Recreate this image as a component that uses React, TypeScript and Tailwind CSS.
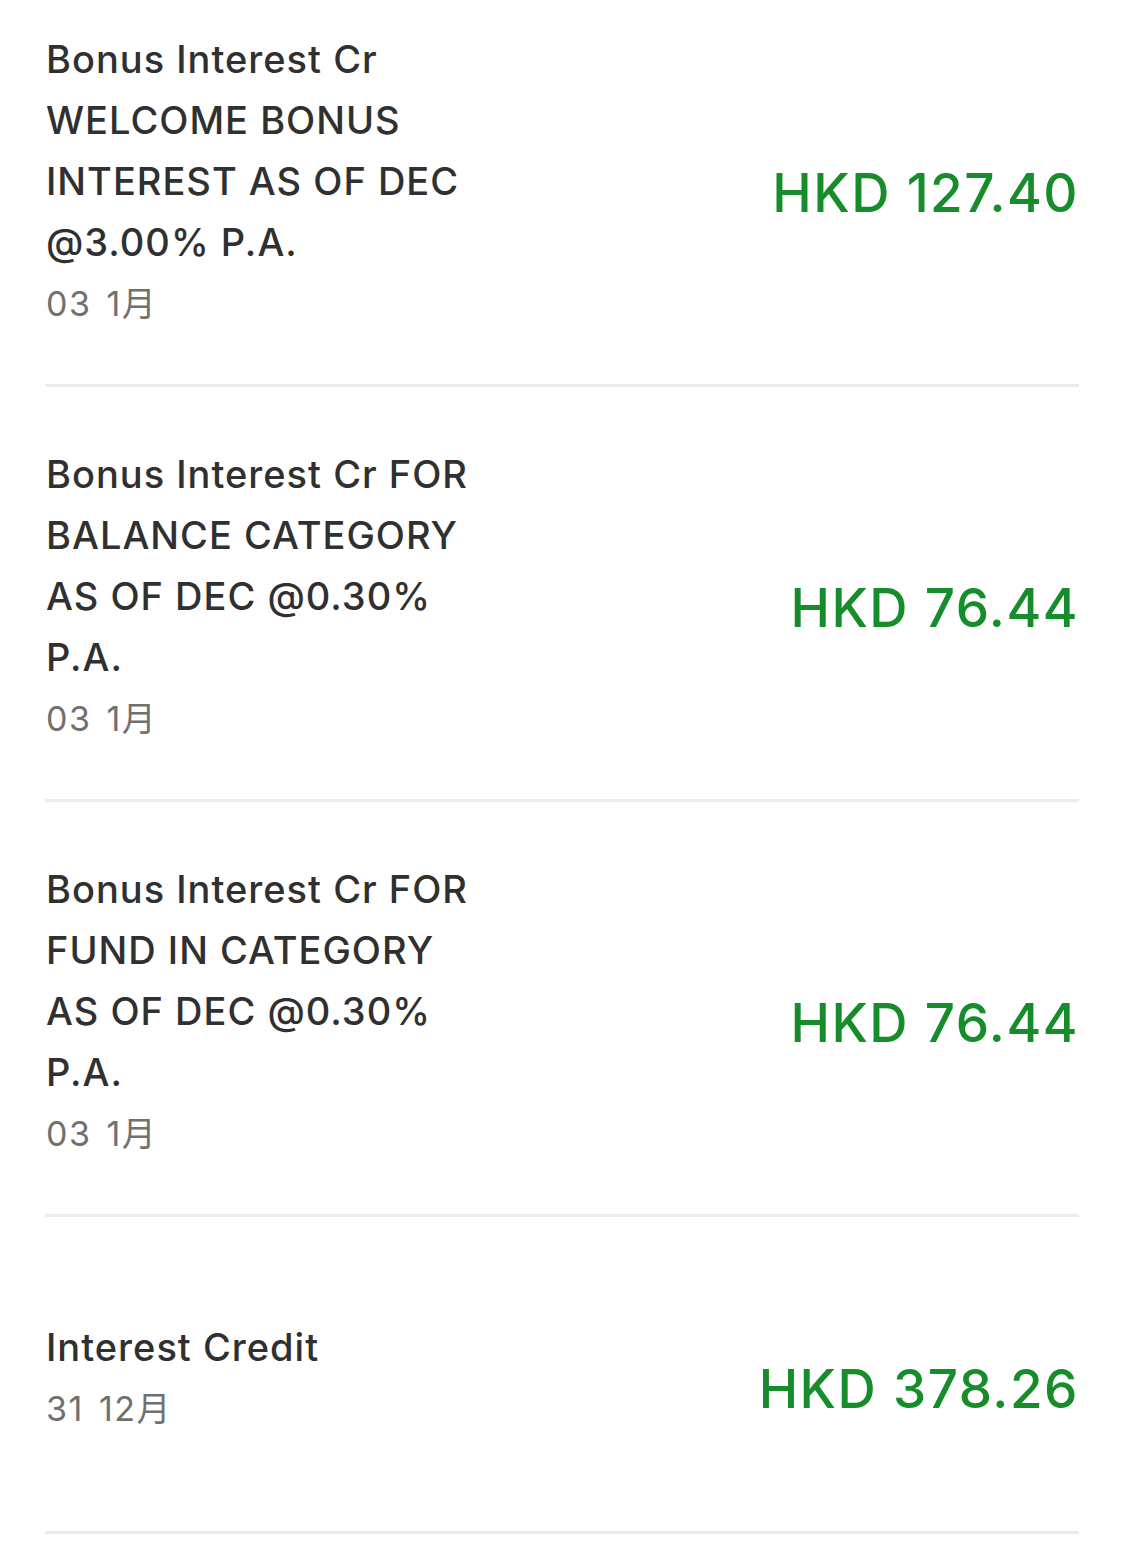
import React from 'react';

interface Txn {
  lines: string[];
  date: string;
  amount: string;
}

const txns: Txn[] = [
  {
    lines: ['Bonus Interest Cr', 'WELCOME BONUS', 'INTEREST AS OF DEC', '@3.00% P.A.'],
    date: '03 1月',
    amount: 'HKD 127.40',
  },
  {
    lines: ['Bonus Interest Cr FOR', 'BALANCE CATEGORY', 'AS OF DEC @0.30%', 'P.A.'],
    date: '03 1月',
    amount: 'HKD 76.44',
  },
  {
    lines: ['Bonus Interest Cr FOR', 'FUND IN CATEGORY', 'AS OF DEC @0.30%', 'P.A.'],
    date: '03 1月',
    amount: 'HKD 76.44',
  },
  {
    lines: ['Interest Credit'],
    date: '31 12月',
    amount: 'HKD 378.26',
  },
];

const TxnRow: React.FC<{ txn: Txn }> = ({ txn }) => (
  <div className="flex min-h-[317px] items-center justify-between border-b-[3px] border-[#ececec] pt-[57px] pb-[49px]">
    <div className="pl-[1px]">
      <div className="text-[38px] font-medium leading-[61px] tracking-[1px] text-[#303030]">
        {txn.lines.map((l, i) => (
          <div key={i}>{l}</div>
        ))}
      </div>
      <div className="text-[34px] leading-[62px] tracking-[1.5px] [word-spacing:4px] text-[#707070]">
        {txn.date}
      </div>
    </div>
    <div className="mt-[22px] text-[53px] font-medium leading-[60px] tracking-[1.5px] text-[#168d2a]">
      {txn.amount}
    </div>
  </div>
);

export default function App() {
  return (
    <div
      className="min-h-screen overflow-hidden bg-white"
      style={{ fontFamily: 'Inter, "Noto Sans CJK SC", sans-serif' }}
    >
      <div className="-mt-[28px] px-[45px]">
        {txns.map((t, i) => (
          <TxnRow key={i} txn={t} />
        ))}
      </div>
    </div>
  );
}
